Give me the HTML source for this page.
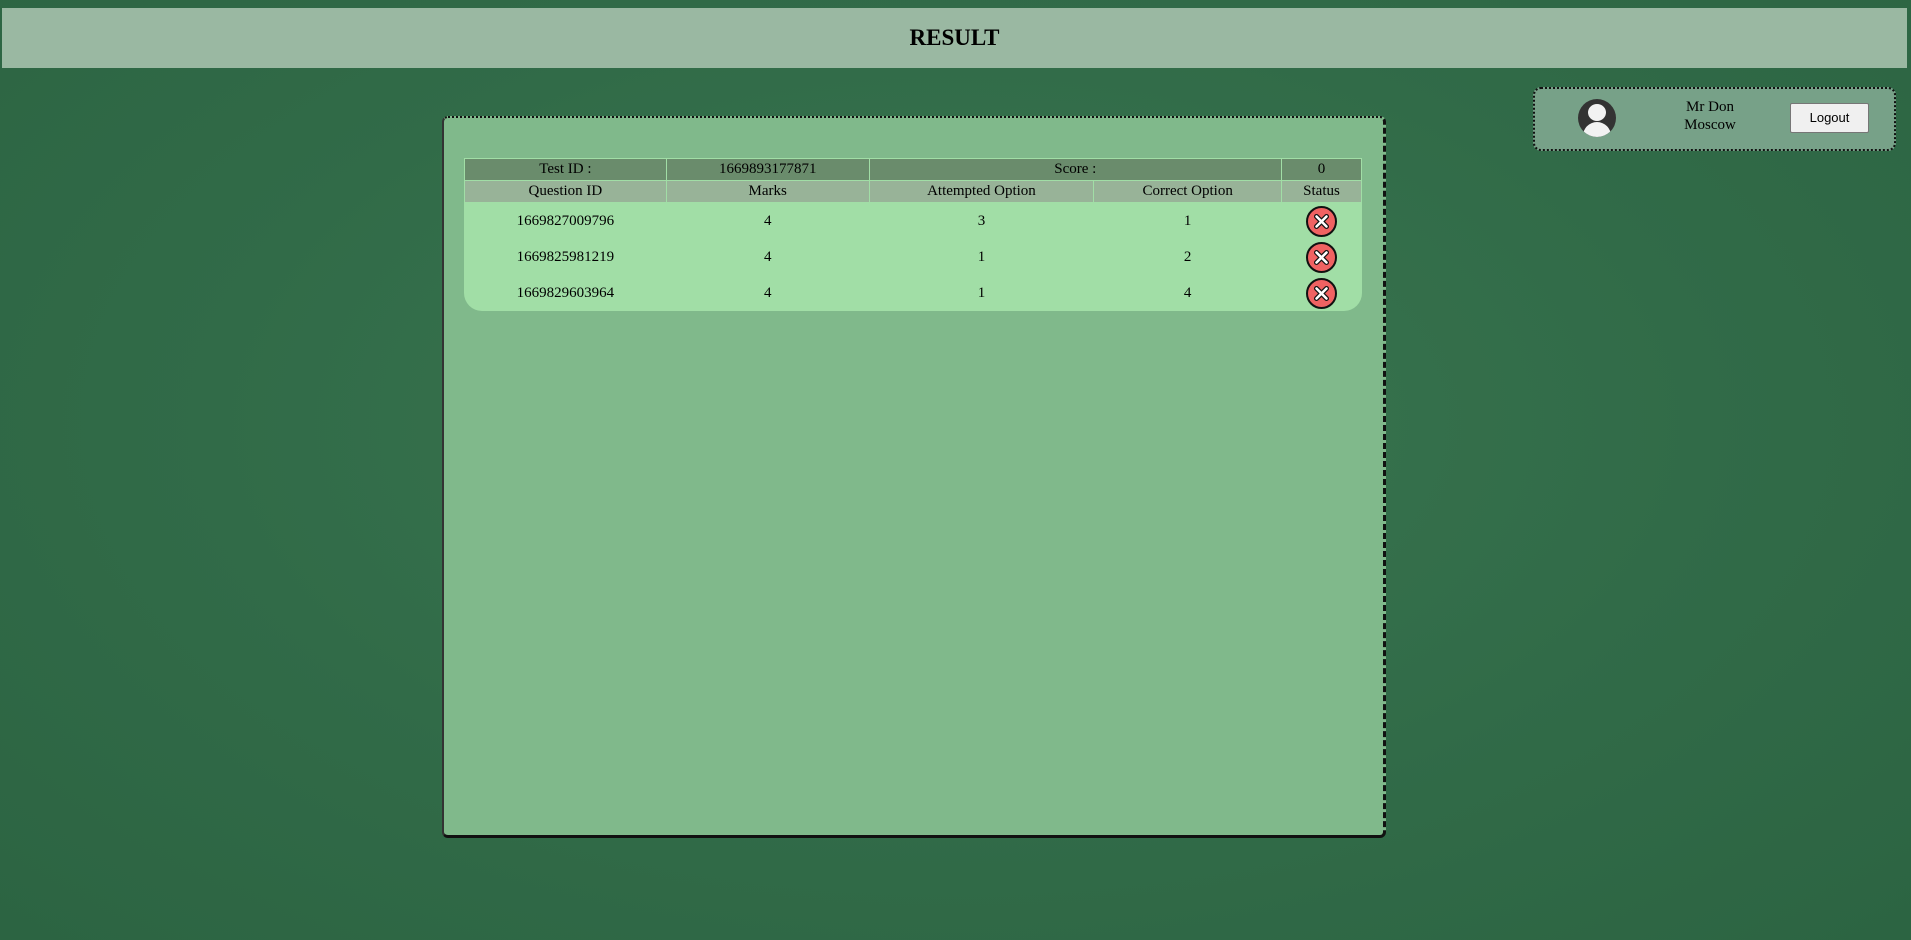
<!DOCTYPE html>
<html><head><meta charset="utf-8"><style>
html,body{margin:0;padding:0;width:1911px;height:940px;overflow:hidden;background:#316b48;font-family:"Liberation Serif",serif;}
body{background:radial-gradient(ellipse at 50% 45%,#3a7650 0%,#316b48 55%,#2c6442 100%);position:relative;}
.hdr{position:absolute;left:2px;top:8px;width:1905px;height:60px;background:#9ab8a2;text-align:center;line-height:60px;font-weight:bold;font-size:23px;color:#000;}
.user{position:absolute;left:1533px;top:87px;width:359px;height:60px;border:2px dotted #111;border-radius:8px;background:#77a188;}
.av{position:absolute;left:43px;top:10px;width:38px;height:38px;border-radius:50%;background:#333;overflow:hidden;}
.av .h{position:absolute;left:10px;top:5px;width:18px;height:17px;border-radius:50%;background:#f2f2f2;}
.av .b{position:absolute;left:5px;top:23px;width:28px;height:20px;border-radius:14px 14px 4px 4px;background:#f2f2f2;}
.nm{position:absolute;left:130px;top:9px;width:90px;text-align:center;font-size:15px;line-height:18px;color:#000;}
.btn{position:absolute;left:255px;top:14px;width:77px;height:28px;background:#f0f0f0;border:1px solid #767676;border-radius:2px;font-family:"Liberation Sans",sans-serif;font-size:13px;text-align:center;line-height:28px;}
.panel{position:absolute;left:442px;top:116px;width:939px;height:717px;background:#80b98b;border-top:2px dotted #111;border-right:3px dashed #111;border-bottom:3px solid #111;border-left:2px solid #333;border-radius:6px;}
table{position:absolute;left:20px;top:40px;width:898px;border-collapse:collapse;font-size:15px;text-align:center;color:#000;}
.wrap{position:absolute;left:20px;top:40px;width:898px;height:153px;background:#a1dea6;border-radius:6px 6px 18px 18px;}
td{padding:0;}
tr.r1 td{background:#6a8c6c;height:21px;border:1px solid #a1dea6;}
tr.r2 td{background:#98b398;height:21px;border:1px solid #a1dea6;}
tr.d td{height:36px;}
.x{display:inline-block;width:27px;height:27px;border-radius:50%;background:#f06262;border:2px solid #111;vertical-align:middle;position:relative;}
.x svg{position:absolute;left:3px;top:3px;}
</style></head><body>
<div class="hdr">RESULT</div>
<div class="user"><div class="av"><div class="h"></div><div class="b"></div></div><div class="nm">Mr Don<br>Moscow</div><div class="btn">Logout</div></div>
<div class="panel">
<div class="wrap"></div>
<table>
<colgroup><col style="width:202px"><col style="width:203px"><col style="width:225px"><col style="width:188px"><col style="width:80px"></colgroup>
<tr class="r1"><td>Test ID :</td><td>1669893177871</td><td colspan="2">Score :</td><td>0</td></tr>
<tr class="r2"><td>Question ID</td><td>Marks</td><td>Attempted Option</td><td>Correct Option</td><td>Status</td></tr>
<tr class="d"><td>1669827009796</td><td>4</td><td>3</td><td>1</td><td><span class="x"><svg width="21" height="21" viewBox="0 0 21 21"><path d="M5.5 5.5L15.5 15.5M15.5 5.5L5.5 15.5" stroke="#111" stroke-width="5" stroke-linecap="round"/><path d="M5.5 5.5L15.5 15.5M15.5 5.5L5.5 15.5" stroke="#fff" stroke-width="2.6" stroke-linecap="round"/></svg></span></td></tr>
<tr class="d"><td>1669825981219</td><td>4</td><td>1</td><td>2</td><td><span class="x"><svg width="21" height="21" viewBox="0 0 21 21"><path d="M5.5 5.5L15.5 15.5M15.5 5.5L5.5 15.5" stroke="#111" stroke-width="5" stroke-linecap="round"/><path d="M5.5 5.5L15.5 15.5M15.5 5.5L5.5 15.5" stroke="#fff" stroke-width="2.6" stroke-linecap="round"/></svg></span></td></tr>
<tr class="d"><td>1669829603964</td><td>4</td><td>1</td><td>4</td><td><span class="x"><svg width="21" height="21" viewBox="0 0 21 21"><path d="M5.5 5.5L15.5 15.5M15.5 5.5L5.5 15.5" stroke="#111" stroke-width="5" stroke-linecap="round"/><path d="M5.5 5.5L15.5 15.5M15.5 5.5L5.5 15.5" stroke="#fff" stroke-width="2.6" stroke-linecap="round"/></svg></span></td></tr>
</table>
</div>
</body></html>
